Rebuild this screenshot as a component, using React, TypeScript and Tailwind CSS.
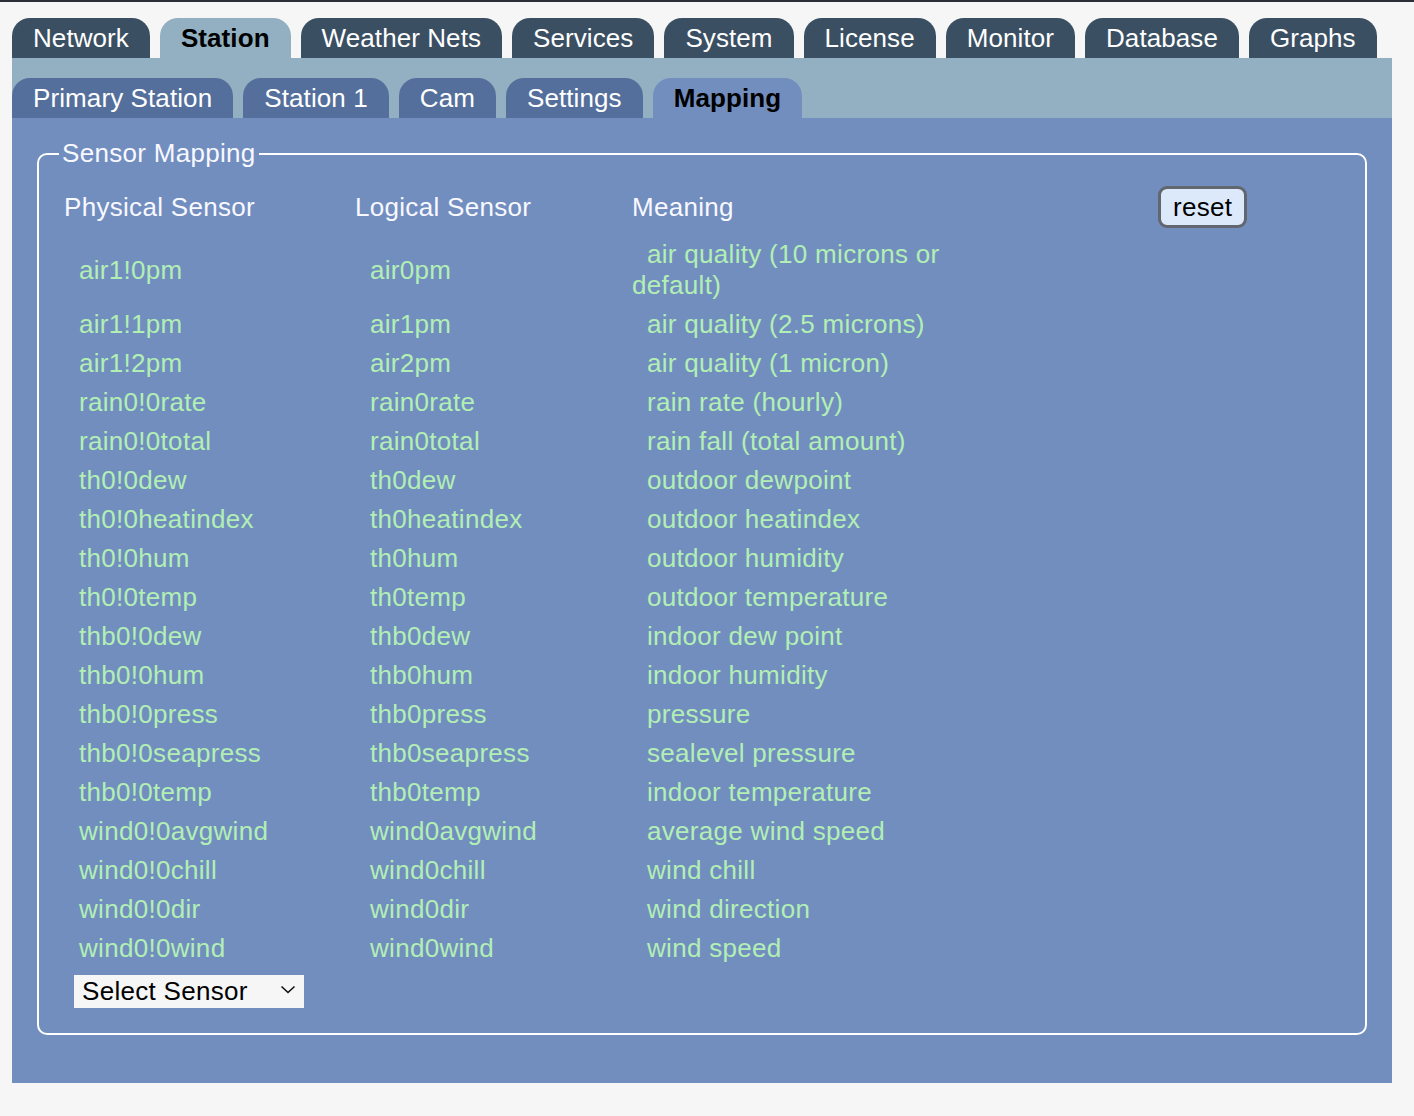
import React from "react";

const mainTabs = [
  "Network",
  "Station",
  "Weather Nets",
  "Services",
  "System",
  "License",
  "Monitor",
  "Database",
  "Graphs",
];

const subTabs = ["Primary Station", "Station 1", "Cam", "Settings", "Mapping"];

const rows: [string, string, string][] = [
  ["air1!0pm", "air0pm", "air quality (10 microns or default)"],
  ["air1!1pm", "air1pm", "air quality (2.5 microns)"],
  ["air1!2pm", "air2pm", "air quality (1 micron)"],
  ["rain0!0rate", "rain0rate", "rain rate (hourly)"],
  ["rain0!0total", "rain0total", "rain fall (total amount)"],
  ["th0!0dew", "th0dew", "outdoor dewpoint"],
  ["th0!0heatindex", "th0heatindex", "outdoor heatindex"],
  ["th0!0hum", "th0hum", "outdoor humidity"],
  ["th0!0temp", "th0temp", "outdoor temperature"],
  ["thb0!0dew", "thb0dew", "indoor dew point"],
  ["thb0!0hum", "thb0hum", "indoor humidity"],
  ["thb0!0press", "thb0press", "pressure"],
  ["thb0!0seapress", "thb0seapress", "sealevel pressure"],
  ["thb0!0temp", "thb0temp", "indoor temperature"],
  ["wind0!0avgwind", "wind0avgwind", "average wind speed"],
  ["wind0!0chill", "wind0chill", "wind chill"],
  ["wind0!0dir", "wind0dir", "wind direction"],
  ["wind0!0wind", "wind0wind", "wind speed"],
];

function MainTab({ label, active }: { label: string; active: boolean }) {
  return (
    <div
      className={
        active
          ? "h-[40px] rounded-t-[18px] bg-[#92b0c1] px-[21px] leading-[40px] font-bold text-black"
          : "h-[40px] rounded-t-[18px] bg-[#3b4f63] px-[21px] leading-[40px] text-white"
      }
    >
      {label}
    </div>
  );
}

function SubTab({ label, active }: { label: string; active: boolean }) {
  return (
    <div
      className={
        active
          ? "h-[40px] rounded-t-[18px] bg-[#728ebf] px-[21px] leading-[40px] font-bold text-black"
          : "h-[40px] rounded-t-[18px] bg-[#546f9c] px-[21px] leading-[40px] text-white"
      }
    >
      {label}
    </div>
  );
}

export default function App() {
  return (
    <div className="min-h-[1116px] bg-[#f6f6f6] font-['Liberation_Sans',Arial,sans-serif] text-[26px] tracking-[0.3px]">
      <div className="h-[2px] bg-[#2b2e37]" />
      <div className="ml-[12px] w-[1380px] pt-[16px]">
        <nav className="flex gap-[10px] tracking-[0.08px]">
          {mainTabs.map((t) => (
            <MainTab key={t} label={t} active={t === "Station"} />
          ))}
        </nav>

        <nav className="flex gap-[10px] bg-[#92b0c1] pt-[20px] tracking-[0.1px]">
          {subTabs.map((t) => (
            <SubTab key={t} label={t} active={t === "Mapping"} />
          ))}
        </nav>

        <div className="bg-[#728ebf] px-[25px] pt-[20px] pb-[48px]">
          <fieldset className="rounded-[10px] border-2 border-white pt-[11px] pr-[20px] pb-[22px] pl-[20px]">
            <legend className="px-[3px] leading-[31px] text-[#f8f8ff]">Sensor Mapping</legend>

            <div className="ml-[5px]">
              <div className="grid h-[55px] grid-cols-[291px_277px_320px_1fr] items-center pb-[1px] text-[#f8f8ff]">
                <div className="leading-[31px]">Physical Sensor</div>
                <div className="leading-[31px]">Logical Sensor</div>
                <div className="leading-[31px]">Meaning</div>
                <div>
                  <button className="ml-[206px] h-[42px] rounded-[9px] border-[3px] border-[#62666f] bg-[#dce9fb] px-[12px] leading-[34px] text-black">
                    reset
                  </button>
                </div>
              </div>

              {rows.map(([phys, logical, meaning]) => (
                <div
                  key={phys}
                  className="grid grid-cols-[291px_277px_320px_1fr] items-center py-[4px] leading-[31px] text-[#b2efb4]"
                >
                  <div className="pl-[15px]">{phys}</div>
                  <div className="pl-[15px]">{logical}</div>
                  <div className="indent-[15px]">{meaning}</div>
                  <div />
                </div>
              ))}

              <div className="relative mt-[4px] ml-[10px] inline-block">
                <select className="h-[33px] w-[230px] appearance-none bg-[#f6f6f6] pl-[8px] leading-[33px] text-black outline-none">
                  <option>Select Sensor</option>
                </select>
                <svg
                  className="pointer-events-none absolute top-[13px] right-[8px]"
                  width="16"
                  height="9"
                  viewBox="0 0 16 9"
                  fill="none"
                >
                  <path d="M1.5 1.5 L8 7.5 L14.5 1.5" stroke="#111" strokeWidth="1.6" />
                </svg>
              </div>
            </div>
          </fieldset>
        </div>
      </div>
    </div>
  );
}
